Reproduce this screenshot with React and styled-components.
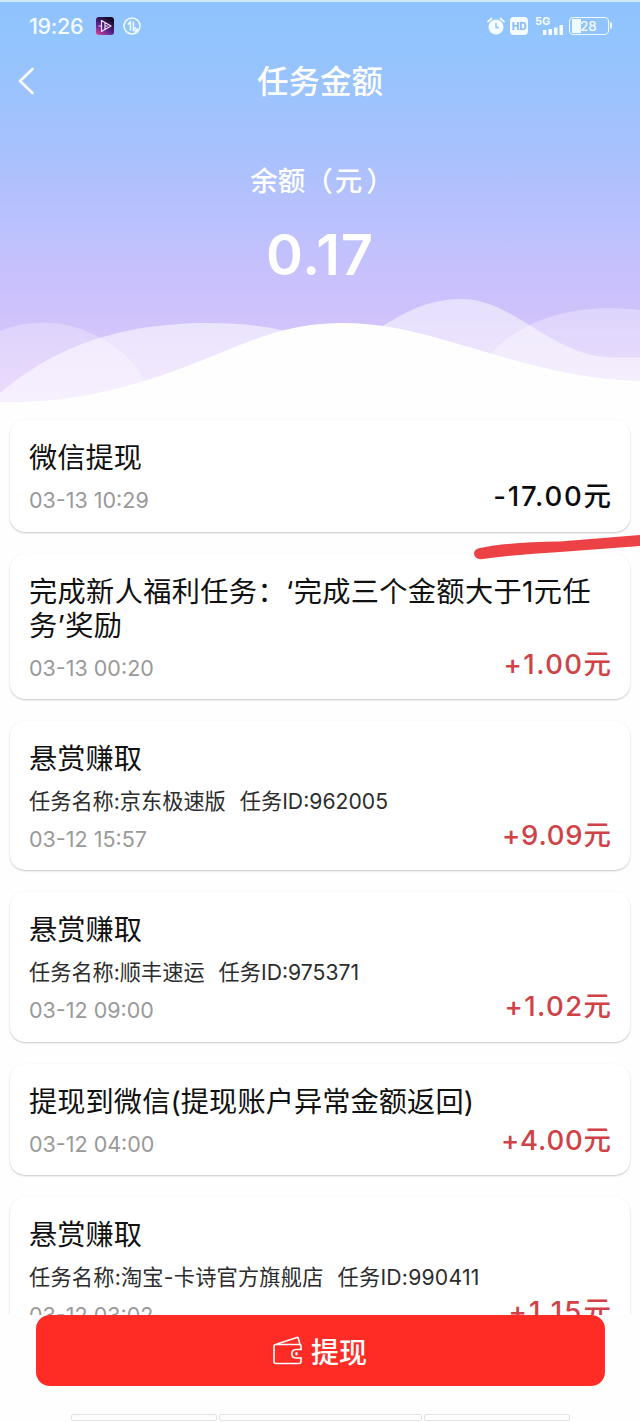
import React from 'react'
import styled, { createGlobalStyle } from 'styled-components';

const GlobalStyle = createGlobalStyle`
  * {
    box-sizing: border-box;
  }
  body {
    margin: 0;
    background: #fefefe;
    font-family: Inter, "Noto Sans CJK SC", sans-serif;
  }
`;

const Screen = styled.div`
  position: relative;
  display: flex;
  flex-direction: column;
  width: 640px;
  height: 1422px;
  overflow: hidden;
  background: #fefefe;
`;

const Header = styled.header`
  position: relative;
  flex: none;
  height: 404px;
  color: #fff;
  border-top: 2px solid #cfe9fb;
  background: linear-gradient(180deg, #8fc3fd 0, #93c4fd 45px, #a8c1fd 150px, #c7c1fd 270px, #d0c2fb 315px, #e2cdfb 385px, #e6d0fb 402px);
`;

const Waves = styled.svg`
  position: absolute;
  left: 0;
  bottom: 0;
`;

const StatusBar = styled.div`
  display: flex;
  align-items: center;
  height: 48px;
  padding: 0 31px 0 29px;
`;

const Clock = styled.span`
  width: 67px;
  font-size: 21.5px;
  font-weight: 500;
  letter-spacing: -0.3px;
  color: #f3fbff;
`;

const StatusIcons = styled.div`
  display: flex;
  align-items: center;
  gap: ${({ $gap }) => $gap}px;
  margin-left: ${({ $end }) => ($end ? 'auto' : 0)};
`;

const TitleBar = styled.div`
  display: grid;
  grid-template-columns: 60px 1fr 60px;
  align-items: center;
  height: 62px;
`;

const BackIcon = styled.svg`
  margin-left: 17px;
`;

const PageTitle = styled.h1`
  margin: 2px 0 0;
  font-size: 31.5px;
  font-weight: 500;
  line-height: 40px;
  text-align: center;
`;

const BalanceLabel = styled.div`
  display: flex;
  justify-content: center;
  gap: 4px;
  margin-top: 50px;
  padding-left: 4px;
  font-size: 27.5px;
  font-weight: 500;
  line-height: 38px;
`;

const BalanceUnit = styled.span`
  margin-left: -2px;
`;

const Balance = styled.div`
  margin-top: 20px;
  font-size: 56px;
  font-weight: 600;
  letter-spacing: 1px;
  line-height: 70px;
  text-align: center;
`;

const List = styled.main`
  flex: none;
  display: flex;
  flex-direction: column;
  gap: 22px;
  height: 911px;
  padding: 16px 10px 0;
  overflow: hidden;
`;

const Card = styled.section`
  position: relative;
  flex: none;
  height: ${({ $height }) => $height}px;
  padding: 21px 19px 0;
  border-radius: 15px;
  background: #fff;
  box-shadow: 0 1px 2px rgba(0, 0, 0, 0.22);
`;

const CardTitle = styled.h2`
  margin: 0;
  font-size: 28.2px;
  font-weight: 400;
  letter-spacing: ${({ $spacing }) => $spacing || 0.1}px;
  line-height: 34px;
  color: #111;
  white-space: pre-line;
`;

const Detail = styled.div`
  display: flex;
  gap: 14px;
  margin-top: 11px;
  font-size: 21.2px;
  line-height: 28px;
  letter-spacing: ${({ $spacing }) => $spacing || 0}px;
  white-space: nowrap;
  color: #2c2c2c;
`;

const Footer = styled.div`
  display: flex;
  justify-content: space-between;
  align-items: flex-end;
  height: 36px;
  margin-top: ${({ $detail }) => ($detail ? 2 : 3)}px;
`;

const Time = styled.time`
  font-size: 21.5px;
  line-height: 28px;
  color: #999;
`;

const Amount = styled.span`
  margin-right: -${({ $spacing }) => $spacing}px;
  padding-bottom: 2px;
  font-size: 27.5px;
  font-weight: 500;
  letter-spacing: ${({ $spacing }) => $spacing}px;
  line-height: 32px;
  color: ${({ $income }) => ($income ? '#d04245' : '#0c0c0c')};
`;

const RedMark = styled.svg`
  position: absolute;
  left: 470px;
  top: 530px;
`;

const BottomBar = styled.footer`
  flex: 1;
  display: flex;
  flex-direction: column;
  align-items: center;
  background: #fefefe;
`;

const WithdrawButton = styled.button`
  display: flex;
  justify-content: center;
  align-items: center;
  gap: 8px;
  width: 569px;
  height: 71px;
  padding: 0;
  border: 0;
  border-radius: 14px;
  background: #fe2c25;
  color: #fff;
  font-family: inherit;
  font-size: 28px;
  font-weight: 500;
`;

const NavBar = styled.div`
  display: grid;
  grid-template-columns: 146px 203px 146px;
  gap: 2px;
  margin-top: 28px;
`;

const NavKey = styled.div`
  height: 7px;
  border: 1px solid #e2e2e2;
  border-radius: 2px;
`;

const records = [
  { title: '微信提现', time: '03-13 10:29', amount: '-17.00元', amountSpacing: 1.8, height: 112 },
  { title: '完成新人福利任务：‘完成三个金额大于1元任\n务’奖励', titleSpacing: 0.36, time: '03-13 00:20', amount: '+1.00元', amountSpacing: 1.4, income: true, height: 145 },
  { title: '悬赏赚取', detail: ['任务名称:京东极速版', '任务ID:962005'], time: '03-12 15:57', amount: '+9.09元', amountSpacing: 0.8, income: true, height: 149 },
  { title: '悬赏赚取', detail: ['任务名称:顺丰速运', '任务ID:975371'], time: '03-12 09:00', amount: '+1.02元', amountSpacing: 1.4, income: true, height: 150 },
  { title: '提现到微信(提现账户异常金额返回)', time: '03-12 04:00', amount: '+4.00元', amountSpacing: 0.8, income: true, height: 111 },
  { title: '悬赏赚取', detail: ['任务名称:淘宝-卡诗官方旗舰店', '任务ID:990411'], detailSpacing: 0.22, time: '03-12 03:02', amount: '+1.15元', amountSpacing: 2.2, income: true, height: 150 },
];

const AppBadge = () => (
  <svg width="18" height="18" viewBox="0 0 18 18">
    <defs>
      <linearGradient id="badge" x1="0" y1="1" x2="0.6" y2="0">
        <stop offset="0" stopColor="#e0489a" />
        <stop offset="0.45" stopColor="#5a2590" />
        <stop offset="1" stopColor="#140a24" />
      </linearGradient>
    </defs>
    <rect width="18" height="18" rx="3" fill="url(#badge)" />
    <path d="M5.5 3.5V14.5L15 9Z M9 6V12 M2.5 9H5.5 M9 9H12" fill="none" stroke="#f6dcff" strokeWidth="1.2" strokeLinejoin="round" />
  </svg>
);

const DataIcon = () => (
  <svg width="18" height="18" viewBox="0 0 18 18" fill="none" stroke="#eefaff" strokeWidth="1.6">
    <circle cx="9" cy="9" r="8" />
    <path d="M4.8 7.6L7.4 5V13.4 M10.4 4.6V13L13 10.4" />
    <path d="M12 15.2L15.2 12" strokeWidth="2.6" />
  </svg>
);

const AlarmIcon = () => (
  <svg width="18" height="18" viewBox="0 0 18 18">
    <circle cx="9" cy="10" r="7.5" fill="#f5fcff" />
    <path d="M1 4.6L4.4 1.5 M17 4.6L13.6 1.5" stroke="#f5fcff" strokeWidth="1.8" strokeLinecap="round" />
    <path d="M9 6V10.6H12" fill="none" stroke="#92c3f6" strokeWidth="1.5" />
  </svg>
);

const HdBadge = styled.span`
  width: 18px;
  height: 18px;
  margin-right: 2px;
  border-radius: 4px;
  background: #f5fcff;
  color: #88bdf2;
  font-size: 10px;
  font-weight: 800;
  line-height: 18px;
  text-align: center;
`;

const Signal = styled.span`
  display: flex;
  flex-direction: column;
  width: 29px;
  height: 19px;
  font-size: 11px;
  font-weight: 700;
  line-height: 9px;
  color: #f5fcff;
`;

const SignalBars = styled.svg`
  margin: -1px 0 0 8px;
`;

const Battery = styled.span`
  position: relative;
  width: 40px;
  height: 18px;
  padding-left: 10px;
  border: 1.5px solid #eefaff;
  border-radius: 4px;
  background: linear-gradient(#eefaff, #eefaff) 2px 1px / 9px 14px no-repeat;
  color: #f5fcff;
  font-size: 13.5px;
  font-weight: 500;
  line-height: 16px;
  text-shadow: 0 0 1px #8fbff2;
  &::after {
    content: '';
    position: absolute;
    right: -4px;
    top: 4px;
    width: 2px;
    height: 7px;
    border-radius: 0 2px 2px 0;
    background: #eefaff;
  }
`;

const WalletIcon = () => (
  <svg width="30" height="29" viewBox="0 0 30 29" fill="none" stroke="#fff" strokeWidth="1.6" strokeLinejoin="round" strokeLinecap="round">
    <path d="M28 13.5V10Q28 8.5 26.5 8.5H2.8Q1 8.5 1 10.5V25.5Q1 27.5 3 27.5H26Q28 27.5 28 25.5V22" />
    <path d="M4 8L24 1.4Q25 1.1 25.3 2.2L27 8.5" />
    <path d="M28 13.5H23Q18.8 13.8 18.8 17.8T23 22H28" />
    <path d="M23.5 17V18.5" strokeWidth="2.2" />
  </svg>
);

const Record = ({ title, titleSpacing, detail, detailSpacing, time, amount, amountSpacing, income, height }) => (
  <Card $height={height}>
    <CardTitle $spacing={titleSpacing}>{title}</CardTitle>
    {detail && (
      <Detail $spacing={detailSpacing}>
        {detail.map((text) => <span key={text}>{text}</span>)}
      </Detail>
    )}
    <Footer $detail={Boolean(detail)}>
      <Time>{time}</Time>
      <Amount $income={income} $spacing={amountSpacing}>{amount}</Amount>
    </Footer>
  </Card>
);

const App = () => {
    return (
        <Screen>
            <GlobalStyle />
            <Header>
                <Waves width="640" height="124" viewBox="0 280 640 124">
                    <path d="M0 331C30 319 62 320 88 332C112 342 132 357 144 380V404H0Z" fill="#fff" fillOpacity="0.27" />
                    <path d="M0 393C45 355 105 323 210 323C265 323 305 334 345 350V404H0Z" fill="#fff" fillOpacity="0.55" />
                    <path d="M345 352C390 320 420 299 461 299C515 299 550 356 613 357.5H640V404H345Z" fill="#fff" fillOpacity="0.5" />
                    <path d="M480 366C515 320 570 302 640 310V404H480Z" fill="#fff" fillOpacity="0.32" />
                    <path d="M0 402C100 405 180 369 235 347C282 328 310 323 345 323C435 323 525 379 640 381V404H0Z" fill="#fefefe" />
                </Waves>
                <StatusBar>
                    <Clock>19:26</Clock>
                    <StatusIcons $gap={9}>
                        <AppBadge />
                        <DataIcon />
                    </StatusIcons>
                    <StatusIcons $gap={5} $end>
                        <AlarmIcon />
                        <HdBadge>HD</HdBadge>
                        <Signal>
                            5G
                            <SignalBars width="21" height="10" viewBox="0 0 21 10">
                                <path d="M0 5H3.5V10H0Z M5.5 4H9V10H5.5Z M11 2.5H14.5V10H11Z M16.5 0H20V10H16.5Z" fill="#f5fcff" />
                            </SignalBars>
                        </Signal>
                        <Battery>28</Battery>
                    </StatusIcons>
                </StatusBar>
                <TitleBar>
                    <BackIcon width="20" height="30" viewBox="0 0 20 30">
                        <path d="M15.5 3L3 15L15.5 27" fill="none" stroke="#fff" strokeWidth="2.6" strokeLinecap="round" strokeLinejoin="round" />
                    </BackIcon>
                    <PageTitle>任务金额</PageTitle>
                </TitleBar>
                <BalanceLabel>
                    <span>余额（</span>
                    <BalanceUnit>元</BalanceUnit>
                    <span>）</span>
                </BalanceLabel>
                <Balance>0.17</Balance>
            </Header>
            <List>
                {records.map((record) => <Record key={record.time} {...record} />)}
            </List>
            <BottomBar>
                <WithdrawButton>
                    <WalletIcon />
                    提现
                </WithdrawButton>
                <NavBar>
                    <NavKey />
                    <NavKey />
                    <NavKey />
                </NavBar>
            </BottomBar>
            <RedMark width="170" height="40" viewBox="470 530 170 40">
                <path d="M480 548Q510 542 560 541.5L640 535V546L560 552Q520 554 483 559Q475 560 474 554Q474 549 480 548Z" fill="#ec4145" />
            </RedMark>
        </Screen>
    )
}

export default App;
